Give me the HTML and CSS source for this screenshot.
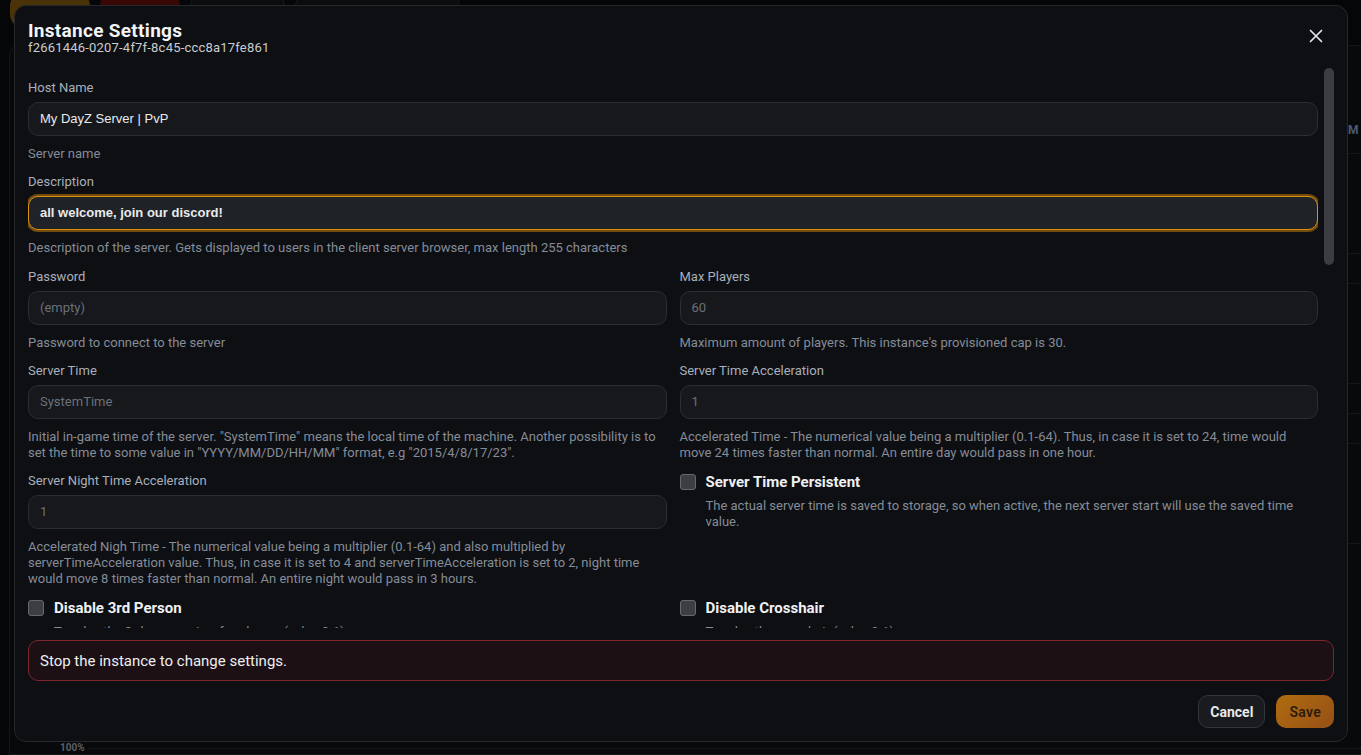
FILE: index.html
```html
<!DOCTYPE html>
<html lang="en">
<head>
<meta charset="utf-8">
<title>Instance Settings</title>
<link rel="stylesheet" href="styles.css">
</head>
<body>
<div class="page">
  <div class="topbar">
    <span class="tb tb-yellow"></span>
    <span class="tb tb-red"></span>
    <span class="tb tb-dark w95"></span>
    <span class="tb tb-dark w165"></span>
  </div>
  <div class="bg-card">
    <div class="bg-body">
      <div class="bg-side">
        <div class="bg-row tall"><span class="bg-m">M</span></div>
        <div class="bg-row"></div>
        <div class="bg-row sm"></div>
        <div class="bg-row"></div>
        <div class="bg-row sm"></div>
        <div class="bg-row sm"></div>
        <div class="bg-row"></div>
      </div>
    </div>
    <div class="bg-foot"><span class="bg-pct">100%</span><span class="bg-dots"></span></div>
  </div>
</div>

<div class="modal" role="dialog" aria-label="Instance Settings">
  <div class="modal-head">
    <div>
      <h1 class="title">Instance Settings</h1>
      <div class="uuid">f2661446-0207-4f7f-8c45-ccc8a17fe861</div>
    </div>
    <button class="close" aria-label="Close">
      <svg width="14" height="14" viewBox="0 0 14 14"><path d="M1.5 1.5 L12.5 12.5 M12.5 1.5 L1.5 12.5" stroke="#e6e7ea" stroke-width="1.7" stroke-linecap="round"/></svg>
    </button>
  </div>

  <div class="scroll-wrap">
  <div class="scroll">
    <div class="stack">
      <div class="field">
        <label class="label">Host Name</label>
        <div class="input value">My DayZ Server | PvP</div>
        <p class="help">Server name</p>
      </div>
      <div class="field">
        <label class="label">Description</label>
        <div class="input value focused">all welcome, join our discord!</div>
        <p class="help">Description of the server. Gets displayed to users in the client server browser, max length 255 characters</p>
      </div>
    </div>

    <div class="grid">
      <div class="field">
        <label class="label">Password</label>
        <div class="input muted">(empty)</div>
        <p class="help">Password to connect to the server</p>
      </div>
      <div class="field">
        <label class="label">Max Players</label>
        <div class="input muted">60</div>
        <p class="help">Maximum amount of players. This instance's provisioned cap is 30.</p>
      </div>

      <div class="field">
        <label class="label">Server Time</label>
        <div class="input muted">SystemTime</div>
        <p class="help">Initial in-game time of the server. "SystemTime" means the local time of the machine. Another possibility is to set the time to some value in "YYYY/MM/DD/HH/MM" format, e.g "2015/4/8/17/23".</p>
      </div>
      <div class="field">
        <label class="label">Server Time Acceleration</label>
        <div class="input muted">1</div>
        <p class="help">Accelerated Time - The numerical value being a multiplier (0.1-64). Thus, in case it is set to 24, time would move 24 times faster than normal. An entire day would pass in one hour.</p>
      </div>

      <div class="field">
        <label class="label">Server Night Time Acceleration</label>
        <div class="input muted">1</div>
        <p class="help">Accelerated Nigh Time - The numerical value being a multiplier (0.1-64) and also multiplied by serverTimeAcceleration value. Thus, in case it is set to 4 and serverTimeAcceleration is set to 2, night time would move 8 times faster than normal. An entire night would pass in 3 hours.</p>
      </div>
      <div class="check">
        <div class="check-row"><span class="box"></span><span class="check-title">Server Time Persistent</span></div>
        <p class="check-desc">The actual server time is saved to storage, so when active, the next server start will use the saved time value.</p>
      </div>

      <div class="check">
        <div class="check-row"><span class="box"></span><span class="check-title">Disable 3rd Person</span></div>
        <p class="check-desc">Toggles the 3rd person view for players (value 0-1)</p>
      </div>
      <div class="check">
        <div class="check-row"><span class="box"></span><span class="check-title">Disable Crosshair</span></div>
        <p class="check-desc">Toggles the crosshair (value 0-1)</p>
      </div>

      <div class="check">
        <div class="check-row"><span class="box"></span><span class="check-title">Disable Personal Light</span></div>
        <p class="check-desc">Disables personal light for all clients connected to server</p>
      </div>
      <div class="check">
        <div class="check-row"><span class="box"></span><span class="check-title">Disable Base Damage</span></div>
        <p class="check-desc">Disable damage/destruction of fence and watchtower</p>
      </div>

      <div class="check">
        <div class="check-row"><span class="box"></span><span class="check-title">Disable Container Damage</span></div>
        <p class="check-desc">Disable damage/destruction of tents, barrels, wooden crate and seachest</p>
      </div>
      <div class="check">
        <div class="check-row"><span class="box"></span><span class="check-title">Disable Respawn Dialog</span></div>
        <p class="check-desc">Disables respawn dialog (value 0-1)</p>
      </div>

      <div class="field">
        <label class="label">Lighting Config</label>
        <div class="input muted">0</div>
        <p class="help">0 for brighter night setup, 1 for darker night setup</p>
      </div>
      <div class="field">
        <label class="label">Respawn Time</label>
        <div class="input muted">5</div>
        <p class="help">Sets the respawn delay (in seconds) before the player is able to get a new character on the server</p>
      </div>

      <div class="field">
        <label class="label">Login Queue Concurrent Players</label>
        <div class="input muted">5</div>
        <p class="help">The number of players concurrently processed during the login process</p>
      </div>
      <div class="field">
        <label class="label">Login Queue Max Players</label>
        <div class="input muted">500</div>
        <p class="help">The maximum number of players that can wait in login queue</p>
      </div>

      <div class="check">
        <div class="check-row"><span class="box"></span><span class="check-title">Force Same Build</span></div>
        <p class="check-desc">When enabled, the server will allow the connection only to clients with same the .exe revision as the server</p>
      </div>
      <div class="check">
        <div class="check-row"><span class="box"></span><span class="check-title">Disable Voice</span></div>
        <p class="check-desc">Enable/disable voice over network (value 0-1)</p>
      </div>

      <div class="check">
        <div class="check-row"><span class="box"></span><span class="check-title">Enable Whitelist</span></div>
        <p class="check-desc">Enable/disable whitelist (value 0-1)</p>
      </div>
      <div class="check">
        <div class="check-row"><span class="box"></span><span class="check-title">Storage Auto Fix</span></div>
        <p class="check-desc">Checks if the persistence files are corrupted and replaces corrupted ones with empty ones</p>
      </div>

      <div class="field">
        <label class="label">VoN Codec Quality</label>
        <div class="input muted">20</div>
        <p class="help">Voice over network codec quality, the higher the better (values 0-30)</p>
      </div>
      <div class="field">
        <label class="label">Guaranteed Updates</label>
        <div class="input muted">1</div>
        <p class="help">Communication protocol used with game server (use only number 1)</p>
      </div>

      <div class="field">
        <label class="label">Time Stamp Format</label>
        <div class="input muted">Short</div>
        <p class="help">Format for timestamps in the .rpt file (value Full/Short)</p>
      </div>
      <div class="field">
        <label class="label">Log Average FPS</label>
        <div class="input muted">1</div>
        <p class="help">Logs the average server FPS (value in seconds)</p>
      </div>

      <div class="check">
        <div class="check-row"><span class="box"></span><span class="check-title">Admin Log Player Hits Only</span></div>
        <p class="check-desc">1 - log player hits only / 0 - log all hits (animals/infected)</p>
      </div>
      <div class="check">
        <div class="check-row"><span class="box"></span><span class="check-title">Admin Log Placement</span></div>
        <p class="check-desc">1 - log placement action (traps, tents)</p>
      </div>
    </div>
  </div>
  <div class="track"><div class="thumb"></div></div>
  </div>

  <div class="alert">Stop the instance to change settings.</div>

  <div class="foot">
    <button class="btn btn-cancel">Cancel</button>
    <button class="btn btn-save">Save</button>
  </div>
</div>
</body>
</html>
```
FILE: styles.css
```css
* { box-sizing: border-box; margin: 0; padding: 0; }
html, body { height: 100%; }
body {
  background: #050608;
  font-family: Roboto, "Liberation Sans", sans-serif;
  color: #e6e8eb;
  overflow: hidden;
}

/* ---------- page behind the dialog ---------- */
.page { height: 100%; display: flex; flex-direction: column; }
.topbar { display: flex; gap: 10px; padding-left: 10px; height: 28px; }
.tb { display: block; height: 36px; margin-top: -8px; border-radius: 14px; width: 80px; }
.tb-yellow { background: #4a3306; }
.tb-red { background: #3a0707; }
.tb-dark { background: #0b0c0e; border: 1px solid #17181b; }
.w95 { width: 95px; }
.w165 { width: 165px; }
.bg-card {
  flex: 1;
  margin: 17px 0 0 9px;
  border: 1px solid #141619;
  border-right: none;
  border-radius: 10px 0 0 0;
  background: #08090b;
  display: flex;
  flex-direction: column;
}
.bg-body { flex: 1; display: flex; justify-content: flex-end; }
.bg-side { width: 260px; margin-top: 60px; border-left: 1px solid #15171a; }
.bg-row { height: 100px; border-bottom: 1px solid #15171a; }
.bg-row.tall { height: 48px; padding-left: 246px; display: flex; align-items: center; }
.bg-row.sm { height: 30px; }
.bg-m { font-size: 12px; font-weight: 700; color: #4d5a72; }
.bg-foot { height: 12px; display: flex; align-items: center; padding-left: 50px; gap: 4px; }
.bg-pct { font-size: 10px; line-height: 12px; color: #5b5f66; font-weight: 700; }
.bg-dots { flex: 1; border-top: 1px dotted #202226; }

/* ---------- dialog ---------- */
.modal {
  position: fixed;
  left: 14px;
  top: 5px;
  width: 1334px;
  height: 737px;
  background: #0d0f13;
  border: 1px solid #26282c;
  border-radius: 12px;
  padding: 14px 13px 13px;
  display: flex;
  flex-direction: column;
}
.modal-head { display: flex; justify-content: space-between; align-items: flex-start; height: 34px; flex: none; }
.title { font-size: 19px; line-height: 21px; font-weight: 700; color: #f3f4f6; letter-spacing: 0.3px; }
.uuid { font-size: 13px; line-height: 14px; color: #c9ccd1; letter-spacing: 0.2px; }
.close {
  width: 24px; height: 24px; margin: 4px 6px 0 0;
  background: none; border: none;
  display: flex; align-items: center; justify-content: center;
}

.scroll-wrap {
  flex: 1;
  min-height: 0;
  margin-top: 14px;
  display: flex;
  gap: 6px;
}
.scroll {
  flex: 1;
  min-width: 0;
  overflow-y: auto;
  scrollbar-width: none;
  padding: 12px 0 25px 0;
}
.scroll::-webkit-scrollbar { display: none; }
.track { width: 10px; flex: none; }
.thumb { width: 10px; height: 197px; background: #3b3d41; border-radius: 5px; }

.stack { display: flex; flex-direction: column; gap: 12px; margin-bottom: 13px; }
.grid { display: grid; grid-template-columns: 1fr 1fr; column-gap: 13px; row-gap: 12px; }

.field { display: flex; flex-direction: column; }
.label { font-size: 13px; line-height: 16px; color: #a9b0bb; margin-bottom: 6px; }
.input {
  height: 34px;
  border: 1px solid #2a2d32;
  background: #16181c;
  border-radius: 10px;
  padding: 0 11px 1px;
  display: flex;
  align-items: center;
  font-size: 13px;
}
.input.value { font-family: "Liberation Sans", Arial, sans-serif; color: #e9eaec; }
.input.focused {
  background: #1f2226;
  border-color: #d8930f;
  box-shadow: 0 0 0 2px rgba(150, 96, 14, 0.75);
  font-weight: 700;
}
.input.muted { color: #6c7078; }
.help { font-size: 13px; line-height: 16px; color: #858c97; margin-top: 10px; }

.check { display: flex; flex-direction: column; }
.check-row { display: flex; align-items: center; gap: 10px; height: 20px; margin-top: -1px; }
.box {
  width: 16px; height: 16px;
  background: #3d3e41;
  border: 1px solid #66686c;
  border-radius: 3px;
  flex: none;
}
.check-title { font-size: 15px; line-height: 20px; font-weight: 700; color: #f0f1f3; }
.check-desc { font-size: 13px; line-height: 16px; color: #858c97; margin-top: 6px; padding-left: 26px; }

.alert {
  margin-top: 12px;
  height: 41px;
  flex: none;
  border: 1px solid #7e262c;
  background: #1d1015;
  border-radius: 10px;
  padding: 0 11px;
  display: flex;
  align-items: center;
  font-size: 15px;
  color: #eceef0;
}

.foot { margin-top: 14px; height: 33px; flex: none; display: flex; justify-content: flex-end; gap: 11px; }
.btn {
  height: 33px;
  border-radius: 10px;
  font-family: Roboto, "Liberation Sans", sans-serif;
  font-size: 14px;
  font-weight: 700;
}
.btn-cancel { padding: 0 11px; background: #1a1b1e; border: 1px solid #34363a; color: #e8e9eb; }
.btn-save {
  padding: 0 13px;
  border: none;
  background: linear-gradient(135deg, #b06c10 0%, #955016 100%);
  color: #2b1d0c;
  font-weight: 600;
  letter-spacing: 0.3px;
}
```
